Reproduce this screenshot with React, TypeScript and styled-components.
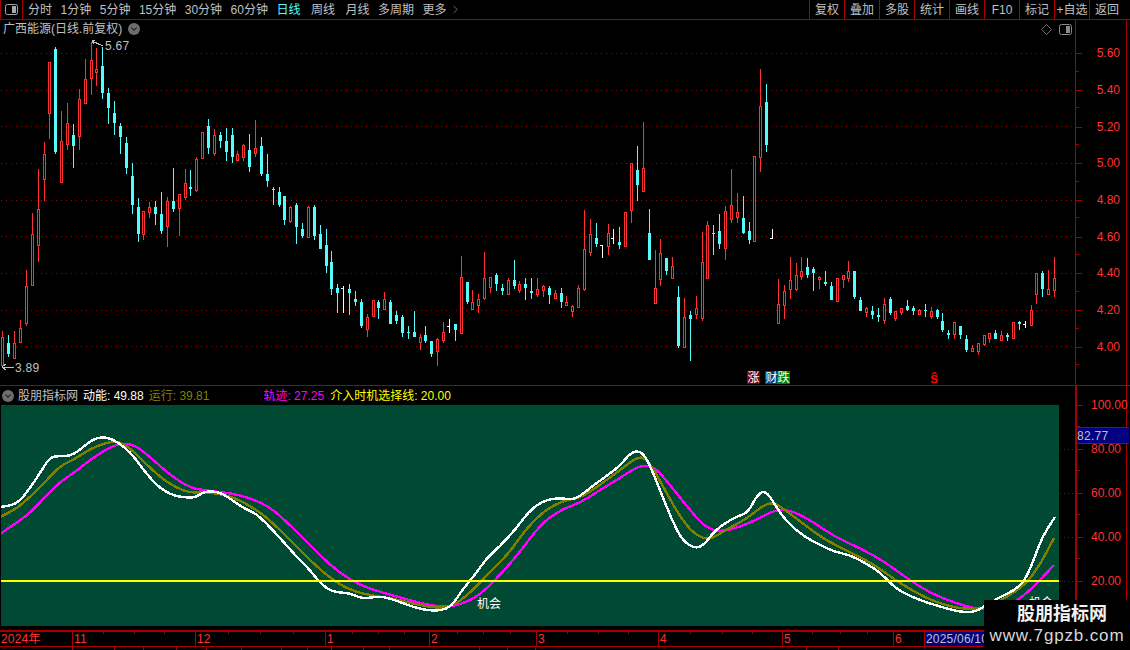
import styled, { createGlobalStyle } from "styled-components";
import { ChevronDown, ChevronRight } from "lucide-react";

const RED_LINE = "#a80000";
const RED_TEXT = "#ff3232";
const CYAN = "#54fcfc";
const GREY = "#c0c0c0";

type Candle = [number, number, number, number, "r" | "c" | "w"];

// high, body top, body bottom, low in screen pixels
const candles: Candle[] = [
  [331, 337, 365, 366, "r"], [335, 343, 354, 357, "c"], [331, 343, 358, 359, "r"], [320, 328, 342, 342, "r"],
  [270, 286, 323, 326, "r"], [213, 234, 285, 286, "r"], [169, 209, 245, 262, "r"], [142, 154, 179, 201, "r"],
  [62, 62, 113, 139, "r"], [47, 49, 152, 154, "c"], [111, 141, 182, 183, "r"], [103, 123, 144, 150, "r"],
  [124, 135, 146, 168, "c"], [89, 99, 136, 150, "r"], [59, 79, 103, 103, "r"], [42, 60, 78, 95, "r"],
  [48, 69, 72, 86, "r"], [47, 66, 93, 99, "c"], [88, 93, 108, 124, "c"], [101, 113, 123, 135, "c"],
  [123, 126, 137, 154, "c"], [137, 143, 168, 174, "c"], [163, 176, 205, 214, "c"], [198, 207, 234, 242, "c"],
  [211, 211, 234, 240, "r"], [202, 207, 212, 218, "r"], [201, 207, 214, 225, "c"], [192, 214, 231, 234, "c"],
  [197, 201, 226, 247, "r"], [168, 201, 209, 212, "c"], [194, 194, 208, 236, "r"], [169, 183, 197, 200, "r"],
  [170, 187, 189, 196, "c"], [157, 159, 190, 192, "r"], [132, 132, 158, 158, "r"], [119, 126, 148, 154, "c"],
  [129, 135, 153, 156, "r"], [132, 135, 141, 148, "c"], [128, 141, 152, 161, "c"], [128, 135, 157, 163, "c"],
  [151, 154, 160, 161, "r"], [144, 145, 157, 161, "r"], [134, 150, 167, 172, "c"], [120, 148, 153, 157, "r"],
  [137, 146, 174, 176, "c"], [154, 174, 181, 187, "c"], [187, 189, 190, 205, "c"], [187, 192, 205, 207, "c"],
  [196, 196, 220, 225, "c"], [206, 207, 221, 223, "r"], [203, 205, 227, 244, "c"], [223, 229, 236, 238, "c"],
  [206, 207, 237, 238, "r"], [205, 207, 236, 240, "c"], [225, 234, 249, 249, "c"], [229, 245, 266, 273, "c"],
  [251, 262, 289, 295, "c"], [284, 288, 293, 313, "c"], [286, 288, 288, 313, "w"], [284, 289, 293, 315, "c"],
  [291, 299, 302, 306, "c"], [299, 302, 326, 328, "c"], [314, 317, 329, 337, "r"], [300, 300, 316, 317, "r"],
  [300, 302, 308, 319, "c"], [292, 299, 309, 309, "r"], [300, 302, 324, 324, "c"], [311, 315, 321, 324, "c"],
  [315, 317, 333, 337, "c"], [326, 332, 333, 339, "c"], [311, 332, 337, 337, "c"], [334, 337, 342, 350, "r"],
  [326, 335, 341, 343, "c"], [341, 341, 354, 357, "c"], [338, 339, 351, 366, "r"], [322, 332, 340, 343, "r"],
  [319, 326, 326, 333, "w"], [324, 324, 330, 341, "c"], [256, 277, 333, 333, "r"], [282, 282, 302, 304, "c"],
  [290, 302, 309, 309, "r"], [294, 299, 305, 313, "r"], [252, 278, 298, 300, "r"], [277, 277, 287, 293, "r"],
  [273, 275, 284, 291, "c"], [284, 288, 291, 295, "c"], [278, 280, 294, 295, "r"], [260, 280, 286, 289, "c"],
  [281, 284, 290, 293, "r"], [278, 284, 288, 300, "c"], [278, 291, 293, 299, "c"], [278, 289, 294, 297, "r"],
  [285, 286, 290, 297, "r"], [286, 288, 295, 304, "c"], [290, 293, 298, 298, "r"], [288, 293, 302, 308, "c"],
  [296, 302, 305, 306, "r"], [305, 306, 311, 317, "r"], [285, 288, 307, 308, "r"], [210, 249, 289, 291, "r"],
  [219, 234, 252, 256, "r"], [223, 238, 244, 247, "c"], [245, 245, 245, 258, "w"], [224, 233, 246, 255, "r"],
  [229, 238, 238, 244, "w"], [227, 242, 245, 249, "c"], [212, 212, 246, 247, "r"], [163, 163, 210, 223, "r"],
  [146, 170, 185, 201, "c"], [122, 168, 191, 191, "r"], [209, 233, 260, 260, "c"], [250, 288, 303, 303, "r"],
  [239, 253, 279, 286, "r"], [258, 258, 271, 275, "c"], [257, 266, 278, 278, "r"], [286, 297, 346, 348, "c"],
  [298, 317, 347, 347, "r"], [311, 315, 319, 361, "c"], [296, 308, 314, 319, "r"], [232, 262, 318, 321, "r"],
  [221, 225, 278, 278, "r"], [225, 233, 234, 255, "c"], [214, 231, 244, 249, "c"], [206, 211, 248, 260, "r"],
  [169, 205, 219, 223, "r"], [193, 212, 217, 223, "r"], [196, 218, 233, 234, "c"], [222, 231, 240, 244, "c"],
  [156, 156, 241, 241, "r"], [69, 106, 157, 172, "r"], [84, 102, 145, 152, "c"], [229, 238, 238, 239, "w"],
  [279, 304, 323, 323, "r"], [285, 291, 305, 319, "r"], [257, 280, 289, 299, "r"], [263, 275, 289, 291, "r"],
  [257, 271, 276, 280, "r"], [258, 267, 275, 278, "c"], [267, 269, 273, 291, "c"], [276, 277, 279, 289, "r"],
  [271, 282, 284, 286, "c"], [282, 286, 300, 300, "c"], [278, 278, 301, 301, "r"], [275, 275, 279, 288, "r"],
  [261, 271, 278, 282, "r"], [271, 271, 297, 299, "c"], [297, 300, 311, 311, "c"], [307, 308, 312, 317, "r"],
  [306, 311, 315, 319, "c"], [308, 315, 317, 322, "c"], [298, 304, 320, 324, "r"], [297, 299, 313, 315, "c"],
  [311, 311, 318, 321, "r"], [308, 308, 312, 315, "r"], [300, 306, 310, 311, "c"], [306, 308, 311, 315, "c"],
  [309, 310, 314, 314, "r"], [304, 310, 311, 317, "c"], [307, 311, 316, 319, "r"], [309, 310, 317, 319, "c"],
  [313, 321, 330, 332, "c"], [330, 333, 335, 339, "c"], [322, 322, 334, 339, "r"], [326, 326, 335, 339, "c"],
  [335, 339, 350, 352, "c"], [345, 348, 351, 352, "r"], [343, 343, 351, 355, "r"], [335, 335, 344, 346, "r"],
  [333, 333, 338, 343, "r"], [330, 333, 339, 339, "c"], [331, 335, 340, 340, "r"], [333, 335, 337, 341, "c"],
  [322, 322, 338, 339, "r"], [321, 322, 324, 330, "c"], [321, 324, 324, 328, "w"], [305, 310, 325, 325, "r"],
  [273, 273, 294, 304, "r"], [271, 273, 289, 297, "c"], [270, 289, 294, 295, "r"], [257, 278, 290, 297, "r"],
];

const whiteLine =
  "0,507 10,506 20,501 30,488 40,473 50,457 60,456 70,456 80,450 90,441 100,437 110,438 120,444 130,452 140,465 150,478 160,488 170,494 180,497 195,498 205,491 220,492 232,500 245,509 255,513 265,522 280,538 295,555 310,570 320,583 332,592 350,593 362,599 380,596 395,600 410,606 425,610 440,611 452,606 462,590 475,575 485,560 500,546 515,530 530,510 545,500 560,498 575,500 590,488 605,477 620,466 632,451 643,452 652,470 662,495 672,520 682,540 695,549 705,544 715,530 735,517 748,513 757,495 766,490 778,510 790,525 805,537 820,545 835,552 850,555 865,563 880,572 895,588 910,596 925,602 945,608 960,612 975,612 985,606 1000,597 1015,590 1025,580 1033,562 1042,537 1055,517";
const oliveLine =
  "0,517 15,510 30,497 45,482 60,466 75,459 90,449 105,443 118,441 130,448 145,463 160,477 175,487 190,493 205,492 220,494 235,498 250,506 265,516 280,530 295,545 315,565 335,582 355,592 375,596 395,599 415,604 435,608 452,607 470,593 490,572 510,552 525,530 545,510 565,500 580,498 600,485 620,470 640,455 650,463 665,490 680,517 695,535 710,540 725,530 745,520 770,500 785,510 805,525 825,540 850,552 875,565 895,580 915,592 935,602 960,609 985,609 1005,598 1025,585 1040,565 1054,538";
const magentaLine =
  "0,534 15,524 30,513 45,497 60,482 75,472 90,460 105,450 120,443 135,445 150,457 170,475 190,488 210,491 230,493 250,498 270,507 290,525 310,545 330,565 350,580 370,589 395,596 420,603 440,607 460,605 480,595 500,575 520,552 540,525 560,510 580,503 600,490 620,478 640,465 655,467 670,485 690,510 705,527 720,532 740,527 760,518 775,510 790,510 810,520 835,537 860,548 885,562 905,577 930,593 955,603 980,610 1005,608 1025,595 1040,580 1054,565";

const navItems = [
  { label: "分时", extra: 0 },
  { label: "1分钟", extra: 0 },
  { label: "5分钟", extra: 0 },
  { label: "15分钟", extra: 0 },
  { label: "30分钟", extra: 0 },
  { label: "60分钟", extra: 0 },
  { label: "日线", extra: 0 },
  { label: "周线", extra: 2 },
  { label: "月线", extra: 2 },
  { label: "多周期", extra: 0 },
  { label: "更多", extra: 0 },
];
const toolButtons = ["复权", "叠加", "多股", "统计", "画线", "F10", "标记", "+自选", "返回"];
const priceLevels = ["5.60", "5.40", "5.20", "5.00", "4.80", "4.60", "4.40", "4.20", "4.00"];
const gridLines = [53, 90, 126, 163, 200, 236, 273, 310, 346];
const indicatorLevels = ["100.00", "80.00", "60.00", "40.00", "20.00"];
const months = [
  { label: "2024年", width: 73 },
  { label: "11", width: 123 },
  { label: "12", width: 130 },
  { label: "1", width: 104 },
  { label: "2", width: 107 },
  { label: "3", width: 122 },
  { label: "4", width: 124 },
  { label: "5", width: 111 },
  { label: "6", width: 31 },
];
const timeTicks = [103, 134, 164, 228, 260, 293, 352, 378, 404, 457, 483, 510, 567, 598, 628, 690, 722, 752, 812, 840, 867];
const tabWidths = [73, 42, 29, 33, 30, 35, 40, 26, 24, 32, 26, 90, 28, 28, 271, 32];

// rounds the corners between traced points
const toSmoothPath = (points: string) => {
  const pts = points.split(" ").map((p) => p.split(",").map(Number));
  let d = `M${pts[0][0]} ${pts[0][1]}`;
  for (let i = 1; i < pts.length - 1; i++) {
    const midX = (pts[i][0] + pts[i + 1][0]) / 2;
    const midY = (pts[i][1] + pts[i + 1][1]) / 2;
    d += ` Q${pts[i][0]} ${pts[i][1]} ${midX} ${midY}`;
  }
  const last = pts[pts.length - 1];
  return `${d} L${last[0]} ${last[1]}`;
};

const GlobalStyle = createGlobalStyle`
  html, body {
    margin: 0;
    padding: 0;
    background: #000;
    overflow: hidden;
  }
`;

const Screen = styled.div`
  position: relative;
  width: 1130px;
  height: 650px;
  overflow: hidden;
  background: #000;
  color: ${GREY};
  font-family: "Liberation Sans", "Noto Sans CJK SC", sans-serif;
  font-size: 12px;
  line-height: 1;
`;

const Toolbar = styled.div`
  display: flex;
  align-items: center;
  height: 20px;
  box-sizing: border-box;
  border-bottom: 1px solid ${RED_LINE};
`;

const PaneToggle = styled.div`
  display: flex;
  align-items: center;
  justify-content: center;
  width: 23px;
  height: 19px;
  box-sizing: border-box;
  border-left: 1px solid ${RED_LINE};
  border-right: 1px solid ${RED_LINE};
`;

const NavList = styled.div`
  display: flex;
  align-items: center;
  gap: 8.5px;
  flex: 1;
  padding-left: 5px;
`;

const NavItem = styled.span<{ $active?: boolean; $extra: number }>`
  margin-left: ${(p) => p.$extra}px;
  color: ${(p) => (p.$active ? CYAN : GREY)};
`;

const MoreItem = styled.span`
  display: flex;
  align-items: center;
  margin-left: -6px;
`;

const ToolButtons = styled.div`
  display: flex;
  height: 19px;
  margin-right: 6px;
`;

const ToolButton = styled.div`
  display: flex;
  align-items: center;
  justify-content: center;
  width: 35px;
  border-left: 1px solid ${RED_LINE};
  box-sizing: border-box;
  white-space: nowrap;
`;

const PricePane = styled.div`
  display: flex;
  height: 366px;
  box-sizing: border-box;
  border-bottom: 1px solid ${RED_LINE};
`;

const PricePlot = styled.div`
  position: relative;
  width: 1075px;
  height: 365px;
`;

const PlotSvg = styled.svg`
  display: block;
`;

const TitleBar = styled.div`
  position: absolute;
  top: 3px;
  left: 3px;
  right: 3px;
  display: flex;
  align-items: center;
  gap: 6px;
`;

const CornerIcons = styled.div`
  display: flex;
  align-items: center;
  gap: 7px;
  margin-left: auto;
`;

const CircleToggle = styled.span`
  display: inline-flex;
  align-items: center;
  justify-content: center;
  width: 12px;
  height: 12px;
  border-radius: 50%;
  background: #6e6e6e;
  color: #111;
`;

const PriceTag = styled.span<{ $x: number; $y: number }>`
  position: absolute;
  left: ${(p) => p.$x}px;
  top: ${(p) => p.$y}px;
  letter-spacing: 0.3px;
  color: ${GREY};
`;

const Badge = styled.span<{ $x: number; $bg: string }>`
  position: absolute;
  left: ${(p) => p.$x}px;
  top: 351px;
  display: flex;
  align-items: center;
  justify-content: center;
  width: 13px;
  height: 13px;
  background: ${(p) => p.$bg};
  color: #fff;
  font-size: 12px;
`;

const SellMark = styled.span`
  position: absolute;
  left: 930px;
  top: 350px;
  color: #ff0000;
  font-size: 15px;
  font-weight: bold;
`;

const Axis = styled.div`
  display: flex;
  flex-direction: column;
  width: 52px;
  margin-right: 3px;
  box-sizing: border-box;
  border-left: 1px solid ${RED_LINE};
  border-right: 1px solid ${RED_LINE};
  padding-top: 15px;
`;

const AxisRow = styled.div<{ $height: number }>`
  position: relative;
  display: flex;
  align-items: center;
  justify-content: flex-end;
  flex: none;
  height: ${(p) => p.$height}px;
  padding-right: 6px;
  color: ${RED_TEXT};

  &::before {
    content: "";
    position: absolute;
    left: 0;
    top: 50%;
    width: 6px;
    height: 1px;
    background: ${RED_LINE};
  }

  &::after {
    content: "";
    position: absolute;
    left: 0;
    bottom: 0;
    width: 3px;
    height: 1px;
    background: ${RED_LINE};
  }
`;

const IndicatorRow = styled(AxisRow)`
  justify-content: flex-start;
  padding: 0 0 0 14px;
  white-space: nowrap;
`;

const IndicatorPane = styled.div`
  display: flex;
  height: 244px;
`;

const IndicatorMain = styled.div`
  display: flex;
  flex-direction: column;
  width: 1075px;
`;

const Legend = styled.div`
  display: flex;
  align-items: center;
  height: 19px;
  padding-left: 2px;
  box-sizing: border-box;
`;

const LegendItem = styled.span<{ $color: string; $left: number }>`
  margin-left: ${(p) => p.$left}px;
  color: ${(p) => p.$color};
  white-space: nowrap;
`;

const IndicatorBody = styled.div`
  display: flex;
  height: 221px;
  padding-left: 1px;
`;

const GreenPanel = styled.div`
  position: relative;
  width: 1058px;
  height: 221px;
  background: #004a34;
`;

const ChanceLabel = styled.span<{ $x: number; $y: number }>`
  position: absolute;
  left: ${(p) => p.$x}px;
  top: ${(p) => p.$y}px;
  color: #fff;
`;

const IndicatorAxis = styled.div`
  position: relative;
  display: flex;
  flex-direction: column;
  width: 52px;
  height: 244px;
  margin-right: 3px;
  box-sizing: border-box;
  border-left: 2px solid ${RED_LINE};
  border-right: 1px solid ${RED_LINE};
`;

const AxisOffset = styled.div`
  margin-top: -3px;
`;

const ValueFlag = styled.div`
  position: absolute;
  top: 41px;
  left: 0;
  right: -3px;
  height: 15px;
  display: flex;
  align-items: center;
  background: #000080;
  border-top: 1px solid ${RED_LINE};
  border-bottom: 1px solid ${RED_LINE};
  color: ${GREY};
  letter-spacing: 0.3px;
`;

const TimeAxis = styled.div`
  position: relative;
  display: flex;
  height: 17px;
  box-sizing: border-box;
  border-top: 2px solid ${RED_LINE};
  border-bottom: 1px solid ${RED_LINE};
`;

const TimeCell = styled.div<{ $width: number }>`
  display: flex;
  align-items: center;
  flex: none;
  width: ${(p) => p.$width}px;
  box-sizing: border-box;
  padding-left: 1px;
  border-right: 1px solid ${RED_LINE};
  color: ${RED_TEXT};
  letter-spacing: 0.2px;
`;

const TimeTick = styled.span<{ $x: number }>`
  position: absolute;
  left: ${(p) => p.$x}px;
  top: 0;
  width: 1px;
  height: 2px;
  background: ${RED_LINE};
`;

const DateFlag = styled.div`
  display: flex;
  align-items: center;
  width: 150px;
  padding-left: 1px;
  background: #000080;
  color: ${GREY};
  letter-spacing: 0.2px;
`;

const TabRow = styled.div`
  display: flex;
  height: 3px;
`;

const Tab = styled.div<{ $width: number }>`
  flex: none;
  width: ${(p) => p.$width}px;
  box-sizing: border-box;
  border-right: 1px solid ${RED_LINE};
`;

const Watermark = styled.div`
  position: absolute;
  right: 0;
  bottom: 0;
  width: 146px;
  height: 50px;
  display: flex;
  flex-direction: column;
  align-items: center;
  background: #000;
  color: #f2f2f2;
`;

const WatermarkTitle = styled.div`
  margin: 5px 0 0 10px;
  font-size: 18px;
  font-weight: bold;
`;

const WatermarkUrl = styled.div`
  margin-top: 4px;
  font-size: 17px;
  letter-spacing: 0.85px;
  color: #d8d8d8;
`;

const PaneIcon = ({ color = "#8a8a8a" }: { color?: string }) => (
  <svg width="13" height="11" viewBox="0 0 13 11">
    <rect x="0.5" y="0.5" width="12" height="10" rx="2" fill="none" stroke={color} />
    <rect x="7" y="2" width="4" height="7" fill={color} />
  </svg>
);

const DiamondIcon = () => (
  <svg width="11" height="11" viewBox="0 0 11 11">
    <path d="M5.5 0.5 L10.5 5.5 L5.5 10.5 L0.5 5.5 Z" fill="none" stroke="#6e6e6e" />
  </svg>
);

const CandleMark = ({ data, index }: { data: Candle; index: number }) => {
  const [high, top, bottom, low, kind] = data;
  const x = Math.round(2.4 + 5.875 * index);
  if (kind === "w") {
    return (
      <g stroke="#fff">
        <line x1={x + 0.5} x2={x + 0.5} y1={high} y2={low} />
        <line x1={x - 2} x2={x} y1={top + 0.5} y2={top + 0.5} />
      </g>
    );
  }
  if (kind === "c") {
    return (
      <g>
        <line x1={x + 0.5} x2={x + 0.5} y1={high} y2={low} stroke={CYAN} />
        <rect x={x - 1} y={top} width={3} height={Math.max(bottom - top, 1)} fill={CYAN} />
      </g>
    );
  }
  return (
    <g stroke={RED_TEXT}>
      <line x1={x + 0.5} x2={x + 0.5} y1={high} y2={top} />
      <line x1={x + 0.5} x2={x + 0.5} y1={bottom} y2={low} />
      <rect x={x - 0.5} y={top + 0.5} width={2} height={Math.max(bottom - top, 1)} fill="#000" />
    </g>
  );
};

const App = () => {
  return (
    <Screen>
      <GlobalStyle />
      <Toolbar>
        <PaneToggle>
          <PaneIcon color="#a8a8a8" />
        </PaneToggle>
        <NavList>
          {navItems.map((item) => (
            <NavItem key={item.label} $active={item.label === "日线"} $extra={item.extra}>
              {item.label}
            </NavItem>
          ))}
          <MoreItem>
            <ChevronRight size={13} strokeWidth={1} />
          </MoreItem>
        </NavList>
        <ToolButtons>
          {toolButtons.map((item) => (
            <ToolButton key={item}>{item}</ToolButton>
          ))}
        </ToolButtons>
      </Toolbar>

      <PricePane>
        <PricePlot>
          <PlotSvg width="1075" height="365" viewBox="0 20 1075 365" shapeRendering="crispEdges">
            {gridLines.map((y) => (
              <line key={y} x1="1" x2="1075" y1={y + 0.5} y2={y + 0.5} stroke="#a00000" strokeDasharray="1 4" />
            ))}
            {candles.map((c, i) => (
              <CandleMark key={i} data={c} index={i} />
            ))}
            <path d="M92 41 L103 46 M92 41 L95 40 M92 41 L94 44" stroke={GREY} fill="none" />
            <path d="M2 367 L14 367 M2 367 L6 364 M2 367 L6 370" stroke={GREY} fill="none" />
          </PlotSvg>
          <TitleBar>
            <span>广西能源(日线.前复权)</span>
            <CircleToggle>
              <ChevronDown size={10} strokeWidth={2.5} />
            </CircleToggle>
            <CornerIcons>
              <DiamondIcon />
              <PaneIcon />
            </CornerIcons>
          </TitleBar>
          <PriceTag $x={105} $y={20}>5.67</PriceTag>
          <PriceTag $x={15} $y={342}>3.89</PriceTag>
          <Badge $x={747} $bg="#800000">涨</Badge>
          <Badge $x={765} $bg="#004080">财</Badge>
          <Badge $x={777} $bg="#008000">跌</Badge>
          <SellMark>ŝ</SellMark>
        </PricePlot>
        <Axis>
          {priceLevels.map((level) => (
            <AxisRow key={level} $height={36.7}>
              {level}
            </AxisRow>
          ))}
        </Axis>
      </PricePane>

      <IndicatorPane>
        <IndicatorMain>
          <Legend>
            <CircleToggle>
              <ChevronDown size={10} strokeWidth={2.5} />
            </CircleToggle>
            <LegendItem $color={GREY} $left={4}>股朋指标网</LegendItem>
            <LegendItem $color="#fff" $left={5}>动能: 49.88</LegendItem>
            <LegendItem $color="#808000" $left={5}>运行: 39.81</LegendItem>
            <LegendItem $color="#ff00ff" $left={54}>轨迹: 27.25</LegendItem>
            <LegendItem $color="#ffff00" $left={6}>介入时机选择线: 20.00</LegendItem>
          </Legend>
          <IndicatorBody>
            <GreenPanel>
              <PlotSvg width="1058" height="221" viewBox="1 405 1058 221" shapeRendering="crispEdges">
                <path d={toSmoothPath(magentaLine)} fill="none" stroke="#ff00ff" strokeWidth="2.4" />
                <path d={toSmoothPath(oliveLine)} fill="none" stroke="#808000" strokeWidth="2.4" />
                <path d={toSmoothPath(whiteLine)} fill="none" stroke="#fff" strokeWidth="2.4" />
                <line x1="1" x2="1059" y1="581" y2="581" stroke="#ffff00" strokeWidth="2" />
              </PlotSvg>
              <ChanceLabel $x={476} $y={193}>机会</ChanceLabel>
              <ChanceLabel $x={1028} $y={192}>机会</ChanceLabel>
            </GreenPanel>
            <PlotSvg width="16" height="221" viewBox="1059 405 16 221" shapeRendering="crispEdges">
              {[449, 493, 537, 581].map((y) => (
                <line key={y} x1="1060" x2="1075" y1={y + 0.5} y2={y + 0.5} stroke="#a00000" strokeDasharray="1 3" />
              ))}
            </PlotSvg>
          </IndicatorBody>
        </IndicatorMain>
        <IndicatorAxis>
          <AxisOffset>
            {indicatorLevels.map((level) => (
              <IndicatorRow key={level} $height={44}>
                {level}
              </IndicatorRow>
            ))}
          </AxisOffset>
          <ValueFlag>82.77</ValueFlag>
        </IndicatorAxis>
      </IndicatorPane>

      <TimeAxis>
        {months.map((m) => (
          <TimeCell key={m.label} $width={m.width}>
            {m.label}
          </TimeCell>
        ))}
        <DateFlag>2025/06/10</DateFlag>
        {timeTicks.map((x) => (
          <TimeTick key={x} $x={x} />
        ))}
      </TimeAxis>

      <TabRow>
        {tabWidths.map((w, i) => (
          <Tab key={i} $width={w} />
        ))}
      </TabRow>

      <Watermark>
        <WatermarkTitle>股朋指标网</WatermarkTitle>
        <WatermarkUrl>www.7gpzb.com</WatermarkUrl>
      </Watermark>
    </Screen>
  );
};

export default App;
